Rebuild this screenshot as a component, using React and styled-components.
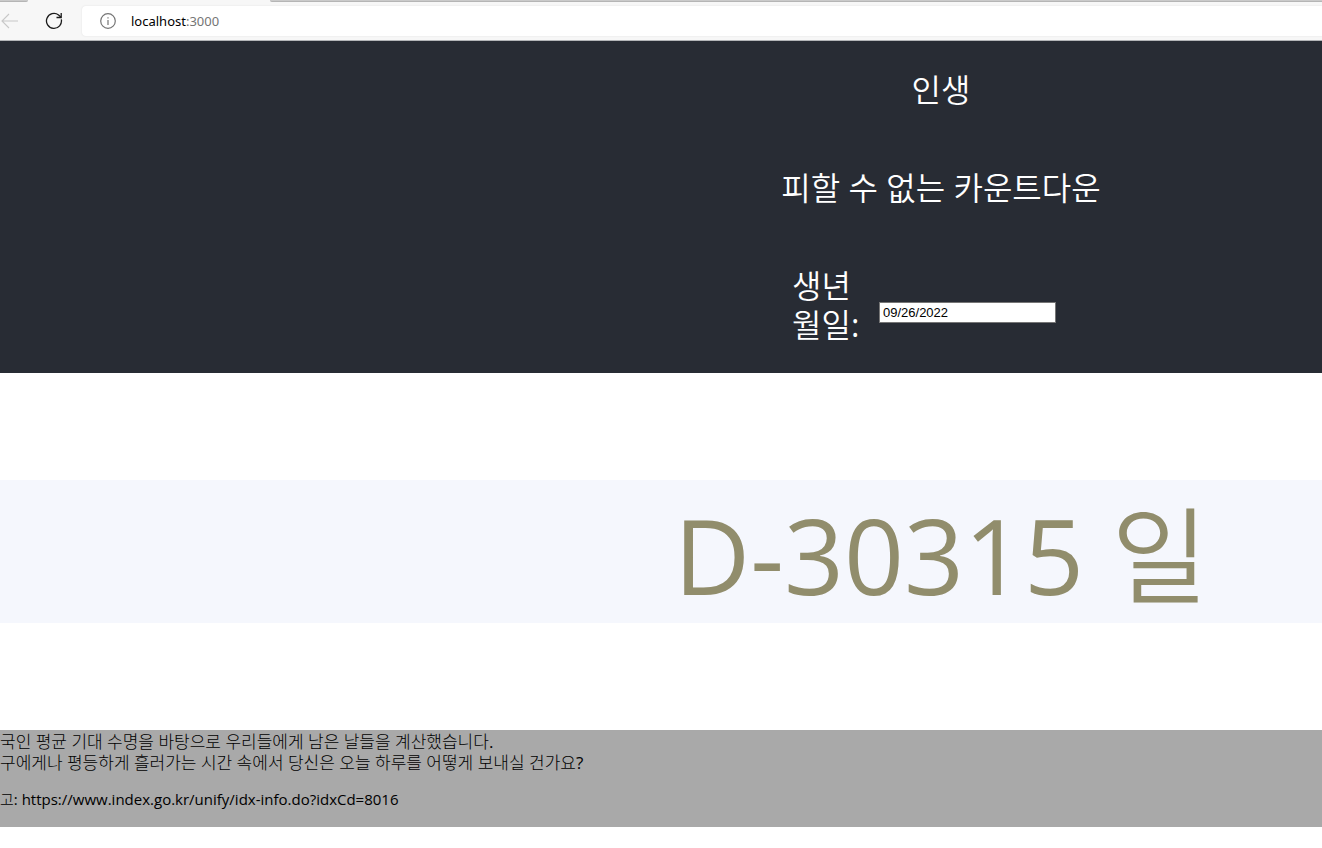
import React, {useState} from 'react';
import styled, {createGlobalStyle} from 'styled-components';


const GlobalStyle = createGlobalStyle`
  body {
    margin: 0;
    background-color: #ffffff;
    color: #000000;
    font-family: "Open Sans", "Noto Sans CJK KR DemiLight", "Noto Sans CJK KR", sans-serif;
    font-size: 16px;
  }
  p {
    margin: 0;
  }
`;

const TabStrip = styled.div`
  display: flex;
  height: 2px;
  background-color: #f7f7f7;
`;

const TabEdge = styled.div`
  flex: ${props => props.$grow ? '1' : '0 0 28px'};
  margin-left: ${props => props.$grow ? '242px' : '0'};
  background-color: #cacaca;
  border-bottom: 1px solid #b5b5b5;
  box-sizing: border-box;
  border-radius: ${props => props.$grow ? '0 0 0 2px' : '0 0 2px 0'};
`;

const ToolBar = styled.div`
  display: flex;
  align-items: center;
  height: 38px;
  background-color: #f7f7f7;
  border-bottom: 1px solid #b4b6b8;
`;

const ToolButton = styled.button`
  display: flex;
  align-items: center;
  justify-content: center;
  width: ${props => props.$wide ? '56px' : '18px'};
  height: 30px;
  margin-left: ${props => props.$wide ? '8px' : '0'};
  padding: 0;
  border: none;
  background: none;
  color: ${props => props.disabled ? '#c8c8c8' : '#1b1b1b'};
`;

const AddressBar = styled.div`
  display: flex;
  flex: 1;
  align-items: center;
  gap: 15px;
  height: 30px;
  padding-left: 18px;
  border-radius: 4px 0 0 4px;
  background-color: #ffffff;
  box-shadow: 0 0 2px rgba(0, 0, 0, 0.1);
  font-family: "Noto Sans", sans-serif;
  font-size: 13px;
`;

const Port = styled.span`
  color: #757575;
`;

const Header = styled.header`
  display: flex;
  flex-direction: column;
  align-items: center;
  gap: 59px;
  padding: 29px 0 29px 560px;
  background-color: #282c34;
  color: #ffffff;
  font-size: 32px;
  line-height: 39px;
`;

const BirthForm = styled.form`
  display: flex;
  align-items: center;
  gap: 15px;
  width: 298px;
`;

const BirthLabel = styled.label`
  flex: 0 0 72px;
`;

const BirthInput = styled.input`
  box-sizing: border-box;
  width: 177px;
  height: 21px;
  margin-top: 14px;
  padding: 1px 3px;
  border: 1px solid #767676;
  background-color: #ffffff;
  color: #000000;
  font-family: "Liberation Sans", Arial, sans-serif;
  font-size: 13px;
`;

const Counter = styled.p`
  margin: 107px 0;
  padding: 6px 0 0 560px;
  background-color: #f5f7fd;
  color: #918d6c;
  font-size: 105px;
  line-height: 137px;
  text-align: center;
  white-space: nowrap;
`;

const Footer = styled.footer`
  padding: 1px 0 17px;
  background-color: #a9a9a9;
  font-family: "Open Sans", "Noto Sans CJK KR Light", "Noto Sans CJK KR", sans-serif;
  font-size: 17px;
  line-height: 21px;
`;

const Source = styled.p`
  margin-top: 16px;
  font-size: 15px;
`;


function BackIcon() {
  return (
    <svg width="18" height="18" viewBox="0 0 18 18" fill="none" stroke="currentColor" strokeWidth="1.1">
      <path d="M18 9H2.5M9 2L2 9l7 7" />
    </svg>
  );
}

function ReloadIcon() {
  return (
    <svg width="18" height="18" viewBox="0 0 18 18" fill="none" stroke="currentColor" strokeWidth="1.3">
      <path d="M16.3 7.3A7.5 7.5 0 1 1 13.6 3L16 5.2" />
      <path d="M16.2 1v4.5h-4.7" />
    </svg>
  );
}

function InfoIcon() {
  return (
    <svg width="16" height="16" viewBox="0 0 16 16" fill="none" stroke="#757575" strokeWidth="1.2">
      <circle cx="8" cy="8" r="7.3" />
      <path d="M8 7v5M8 4.2v1.4" />
    </svg>
  );
}

function Browser() {
  return (
    <>
      <TabStrip>
        <TabEdge />
        <TabEdge $grow />
      </TabStrip>
      <ToolBar>
        <ToolButton type="button" aria-label="Back" disabled><BackIcon /></ToolButton>
        <ToolButton type="button" aria-label="Reload" $wide><ReloadIcon /></ToolButton>
        <AddressBar>
          <InfoIcon />
          <span>localhost<Port>:3000</Port></span>
        </AddressBar>
      </ToolBar>
    </>
  );
}

function App() {

  const [birth, setBirth] = useState('09/26/2022');

  return (
    <>
      <GlobalStyle />
      <Browser />
      <Header>
        <p>인생</p>
        <p>피할 수 없는 카운트다운</p>
        <BirthForm>
          <BirthLabel htmlFor="birth">생년월일:</BirthLabel>
          <BirthInput id="birth" type="text" value={birth} onChange={e => setBirth(e.target.value)} />
        </BirthForm>
      </Header>
      <Counter>D-30315 일</Counter>
      <Footer>
        <p>국인 평균 기대 수명을 바탕으로 우리들에게 남은 날들을 계산했습니다.</p>
        <p>구에게나 평등하게 흘러가는 시간 속에서 당신은 오늘 하루를 어떻게 보내실 건가요?</p>
        <Source>고: https://www.index.go.kr/unify/idx-info.do?idxCd=8016</Source>
      </Footer>
    </>
  );
}

export default App;
